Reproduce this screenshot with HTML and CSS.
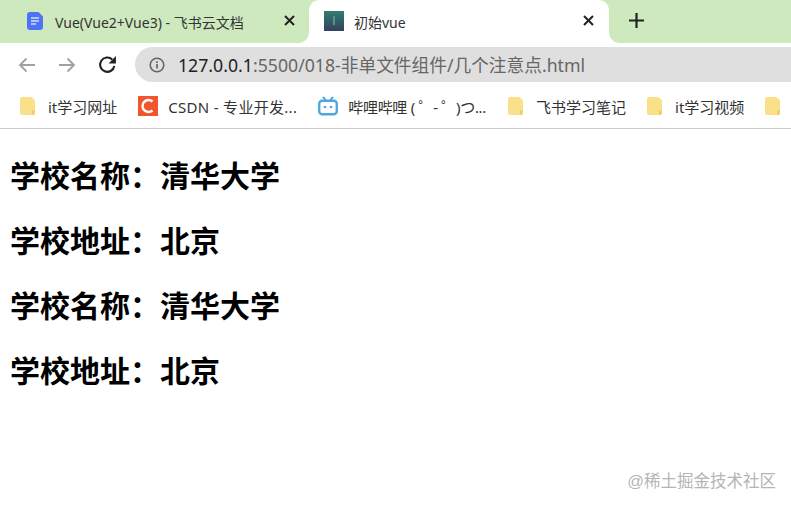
FILE: index.html
```html
<!DOCTYPE html>
<html>
<head>
    <meta charset="utf-8">
    <title>初始vue</title>
    <link rel="stylesheet" href="styles.css">
</head>
<body>

<div class="tabs">
    <div class="tab">
        <svg class="tab-icon" width="16" height="18" viewBox="0 0 16 18">
            <path d="M3 0h8.500L16 4.500V15a3 3 0 0 1-3 3H3a3 3 0 0 1-3-3V3a3 3 0 0 1 3-3z" fill="#4f73f5"/>
            <path d="M4 6h8M4 9h8M4 12h5" stroke="#d5defc" stroke-width="1.500"/>
        </svg>
        <span class="tab-title">Vue(Vue2+Vue3) - 飞书云文档</span>
        <svg class="tab-close" width="11" height="11" viewBox="0 0 11 11">
            <path d="M1 1l9 9M10 1l-9 9" stroke="#222" stroke-width="2"/>
        </svg>
    </div>
    <div class="tab active">
        <div class="vue-icon"></div>
        <span class="tab-title">初始vue</span>
        <svg class="tab-close" width="11" height="11" viewBox="0 0 11 11">
            <path d="M1 1l9 9M10 1l-9 9" stroke="#222" stroke-width="2"/>
        </svg>
    </div>
    <svg class="new-tab" width="15" height="15" viewBox="0 0 15 15">
        <path d="M7.500 0v15M0 7.500h15" stroke="#222" stroke-width="2.200"/>
    </svg>
</div>

<div class="toolbar">
    <svg class="nav-btn" width="18" height="16" viewBox="0 0 18 16">
        <path d="M17 8H2M8.500 1.500L2 8l6.500 6.500" fill="none" stroke="#a0a0a0" stroke-width="1.800"/>
    </svg>
    <svg class="nav-btn" width="18" height="16" viewBox="0 0 18 16">
        <path d="M1 8h15M9.500 1.500L16 8l-6.500 6.500" fill="none" stroke="#a0a0a0" stroke-width="1.800"/>
    </svg>
    <svg class="nav-btn" width="19" height="19" viewBox="0 0 18 18">
        <path d="M15.500 10.500A6.800 6.800 0 1 1 13.500 4.200" fill="none" stroke="#222" stroke-width="2"/>
        <path d="M17 1v7h-7z" fill="#222"/>
    </svg>
    <div class="address">
        <svg width="16" height="16" viewBox="0 0 16 16">
            <circle cx="8" cy="8" r="6.800" fill="none" stroke="#666" stroke-width="1.600"/>
            <path d="M8 7v4.500M8 4.300v1.600" stroke="#666" stroke-width="1.700"/>
        </svg>
        <span class="url"><span class="host">127.0.0.1</span>:5500/018-非单文件组件/几个注意点.html</span>
    </div>
</div>

<div class="bookmarks">
    <div class="bookmark">
        <svg class="folder" width="16" height="18" viewBox="0 0 16 18"><use href="#folder-shape"/></svg>
        <span>it学习网址</span>
    </div>
    <div class="bookmark wide-icon">
        <svg width="20" height="20" viewBox="0 0 20 20">
            <rect width="20" height="20" fill="#f0552e"/>
            <path d="M14.500 5.500A6 6 0 1 0 14.500 14.500" fill="none" stroke="#fff" stroke-width="2.400"/>
        </svg>
        <span class="csdn-label">CSDN - 专业开发...</span>
    </div>
    <div class="bookmark wide-icon">
        <svg width="20" height="20" viewBox="0 0 20 20">
            <path d="M5 1l3 3.500M15 1l-3 3.500" stroke="#4fa8dc" stroke-width="2"/>
            <rect x="1.200" y="4.700" width="17.600" height="13.600" rx="3" fill="none" stroke="#4fa8dc" stroke-width="2.400"/>
            <circle cx="7" cy="11" r="1.300" fill="#4fa8dc"/>
            <circle cx="13" cy="11" r="1.300" fill="#4fa8dc"/>
        </svg>
        <span class="bili-label">哔哩哔哩 ( ゜- ゜)つ...</span>
    </div>
    <div class="bookmark">
        <svg class="folder" width="16" height="18" viewBox="0 0 16 18"><use href="#folder-shape"/></svg>
        <span>飞书学习笔记</span>
    </div>
    <div class="bookmark">
        <svg class="folder" width="16" height="18" viewBox="0 0 16 18"><use href="#folder-shape"/></svg>
        <span>it学习视频</span>
    </div>
    <div class="bookmark">
        <svg class="folder" width="16" height="18" viewBox="0 0 16 18"><use href="#folder-shape"/></svg>
    </div>
</div>

<svg width="0" height="0" class="defs">
    <defs>
        <g id="folder-shape">
            <path d="M2 0h9l4 3v13a2 2 0 0 1-2 2H2a2 2 0 0 1-2-2V2a2 2 0 0 1 2-2z" fill="#fbe08a"/>
            <path d="M12 13.500h3V16a2 2 0 0 1-2 2h-1z" fill="#f2cf62"/>
        </g>
    </defs>
</svg>

<div class="content">
    <h2>学校名称：清华大学</h2>
    <h2>学校地址：北京</h2>
    <h2>学校名称：清华大学</h2>
    <h2>学校地址：北京</h2>
</div>

<div class="watermark">@稀土掘金技术社区</div>

</body>
</html>
```

FILE: styles.css
```css
body {
    font-family: "Liberation Sans", "Noto Sans CJK SC", sans-serif;
    margin: 0;
    height: 506px;
    overflow: hidden;
    background-color: #fff;
    display: flex;
    flex-direction: column;
}
.tabs {
    height: 43px;
    background-color: #cfe9bf;
    display: flex;
    align-items: center;
    flex-shrink: 0;
}
.tab {
    width: 309px;
    height: 43px;
    padding: 0 14px 2px 27px;
    box-sizing: border-box;
    display: flex;
    align-items: center;
    font-family: "Noto Sans", "Noto Sans CJK SC", sans-serif;
    font-size: 14px;
    color: #333;
}
.tab.active {
    position: relative;
    width: 300px;
    padding: 0 15px 2px 15px;
    background-color: #fff;
    border-radius: 10px 10px 0 0;
}
.tab.active::before, .tab.active::after {
    content: "";
    position: absolute;
    bottom: 0;
    width: 10px;
    height: 10px;
}
.tab.active::before {
    left: -10px;
    background: radial-gradient(circle at 0 0, #cfe9bf 9.500px, #fff 10px);
}
.tab.active::after {
    right: -10px;
    background: radial-gradient(circle at 100% 0, #cfe9bf 9.500px, #fff 10px);
}
.tab-icon {
    margin-right: 12px;
}
.tab-title {
    flex: 1;
    white-space: nowrap;
    padding-top: 2px;
}
.vue-icon {
    width: 20px;
    height: 20px;
    margin-right: 10px;
    background: linear-gradient(#2f7f6f, #35405f);
    display: flex;
    justify-content: center;
    align-items: center;
}
.vue-icon::after {
    content: "";
    width: 2px;
    height: 9px;
    background-color: #5f8f88;
}
.new-tab {
    margin-left: 20px;
    margin-bottom: 2px;
}
.toolbar {
    height: 43px;
    display: flex;
    align-items: center;
    padding-left: 18px;
    flex-shrink: 0;
}
.nav-btn {
    margin-right: 22px;
}
.address {
    flex: 1;
    height: 35px;
    margin-left: -4px;
    padding-left: 14px;
    background-color: #dfdfdf;
    border-radius: 18px 0 0 18px;
    display: flex;
    align-items: center;
    gap: 13px;
    font-family: "Noto Sans", "Noto Sans CJK SC", sans-serif;
    font-size: 17.700px;
    color: #666;
}
.url {
    margin-bottom: 2px;
}
.host {
    color: #222;
}
.bookmarks {
    height: 43px;
    padding: 0 0 2px 20px;
    display: flex;
    align-items: center;
    gap: 21px;
    border-bottom: 1px solid #ccc;
    box-sizing: border-box;
    font-family: "Noto Sans", "Noto Sans CJK SC", sans-serif;
    font-size: 15px;
    color: #333;
    white-space: nowrap;
    flex-shrink: 0;
}
.bookmark {
    display: flex;
    align-items: center;
    gap: 12px;
}
.bookmark.wide-icon {
    gap: 10px;
}
.csdn-label {
    letter-spacing: .3px;
}
.bili-label {
    letter-spacing: -.3px;
    margin-right: 1px;
}
.defs {
    position: absolute;
}
.content {
    padding: 30px 10px 0;
}
h2 {
    font-size: 30px;
    line-height: 35px;
    margin: 0 0 30px;
    color: #000;
    font-weight: bold;
}
.watermark {
    position: absolute;
    right: 15px;
    top: 468px;
    font-size: 16.500px;
    color: #b5b5b5;
}
```
